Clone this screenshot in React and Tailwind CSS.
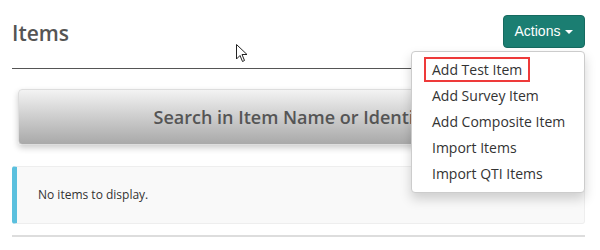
import React from "react";

export default function App() {
  const items = ["Add Test Item", "Add Survey Item", "Add Composite Item", "Import Items", "Import QTI Items"];
  return (
    <div className="relative w-[600px] h-[250px] bg-white pl-3 pr-[15px] pt-[15px] overflow-hidden" style={{ fontFamily: '"Open Sans", sans-serif' }}>
      <div className="flex items-start justify-between h-[54px] border-b border-[#555]">
        <h1 className="text-[21px] leading-[28px] mt-[4px] text-[#555] font-semibold">Items</h1>
        <div className="relative">
          <button className="flex items-center gap-[5px] h-[33px] w-[82px] justify-center rounded-[4px] bg-[#1b7e72] border border-[#166a60] text-white text-[14px]" style={{ fontFamily: '"Liberation Sans", Arial, sans-serif' }}>
            Actions
            <span className="w-0 h-0 border-l-[4px] border-r-[4px] border-t-[4px] border-l-transparent border-r-transparent border-t-white" />
          </button>
          <div className="absolute right-0 top-[36px] w-[174px] h-[142px] bg-white border border-[#ccc] rounded-[4px] shadow-[0_6px_12px_rgba(0,0,0,0.175)] z-10 pt-[4px]">
            {items.map((t, i) => (
              <div key={t} className="h-[26px] flex items-center pl-[20px] text-[14px] text-[#333]">
                {i === 0 ? (
                  <span className="ml-[-8px] px-[6px] h-[25px] flex items-center border-2 border-[#ee3a3a]">{t}</span>
                ) : (
                  t
                )}
              </div>
            ))}
          </div>
        </div>
      </div>
      <div className="mt-[20px] ml-[6px] mr-[6px] h-[56px] rounded-[4px] border border-[#ddd] bg-gradient-to-b from-[#f3f3f3] to-[#a9a9a9] shadow-[0_3px_6px_rgba(0,0,0,0.2)] flex items-center justify-center">
        <span className="text-[18px] font-semibold text-[#555] whitespace-nowrap">Search in Item Name or Identifier</span>
      </div>
      <div className="mt-[21px] h-[58px] bg-[#f9f9f9] border border-[#eee] border-l-[5px] border-l-[#5bc0de] rounded-[3px] flex items-center pl-[21px]">
        <span className="text-[12px] text-[#333]">No items to display.</span>
      </div>
      <div className="mt-[11px] border-t-2 border-[#ddd]" />
      <svg className="absolute left-[236px] top-[44px]" width="12" height="19" viewBox="0 0 12 19">
        <path d="M0.5 0.5 L0.5 15 L4 11.5 L6.5 17.5 L8.5 16.5 L6 10.5 L11 10.5 Z" fill="white" stroke="#222" strokeWidth="1" strokeLinejoin="round" />
      </svg>
    </div>
  );
}
